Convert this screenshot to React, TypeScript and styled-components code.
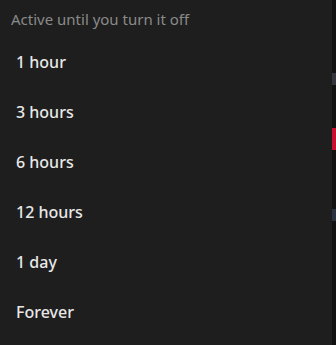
import React from "react";
import styled, { createGlobalStyle } from "styled-components";

const Global = createGlobalStyle`
  html, body { margin: 0; padding: 0; background: #121212; }
  body { font-family: "Noto Sans", "DejaVu Sans", sans-serif; }
`;

const Page = styled.div`
  display: flex;
  width: 336px;
  height: 345px;
  overflow: hidden;
`;

const Menu = styled.div`
  width: 332px;
  flex: none;
  background: #1e1e1e;
  display: flex;
  flex-direction: column;
`;

const Header = styled.div`
  padding: 9px 11px 0 11px;
  height: 37px;
  box-sizing: border-box;
  font-size: 15px;
  line-height: 20px;
  color: #8a8a8a;
`;

const Option = styled.div`
  height: 50px;
  display: flex;
  align-items: center;
  padding-left: 16px;
  font-size: 16px;
  font-weight: 500;
  color: #e8e8e8;
`;

const Backdrop = styled.div`
  flex: 1;
  position: relative;
  background: #121212;
`;

const Chip = styled.div<{ $top: number; $h: number; $bg: string }>`
  position: absolute;
  left: 0;
  top: ${(p) => p.$top}px;
  height: ${(p) => p.$h}px;
  width: 10px;
  background: ${(p) => p.$bg};
`;

const options = ["1 hour", "3 hours", "6 hours", "12 hours", "1 day", "Forever"];

export default function App() {
  return (
    <Page>
      <Global />
      <Menu>
        <Header>Active until you turn it off</Header>
        {options.map((o) => (
          <Option key={o}>{o}</Option>
        ))}
      </Menu>
      <Backdrop>
        <Chip $top={73} $h={12} $bg="#33363d" />
        <Chip $top={128} $h={22} $bg="#c8102e" />
        <Chip $top={209} $h={12} $bg="#2c3340" />
      </Backdrop>
    </Page>
  );
}
